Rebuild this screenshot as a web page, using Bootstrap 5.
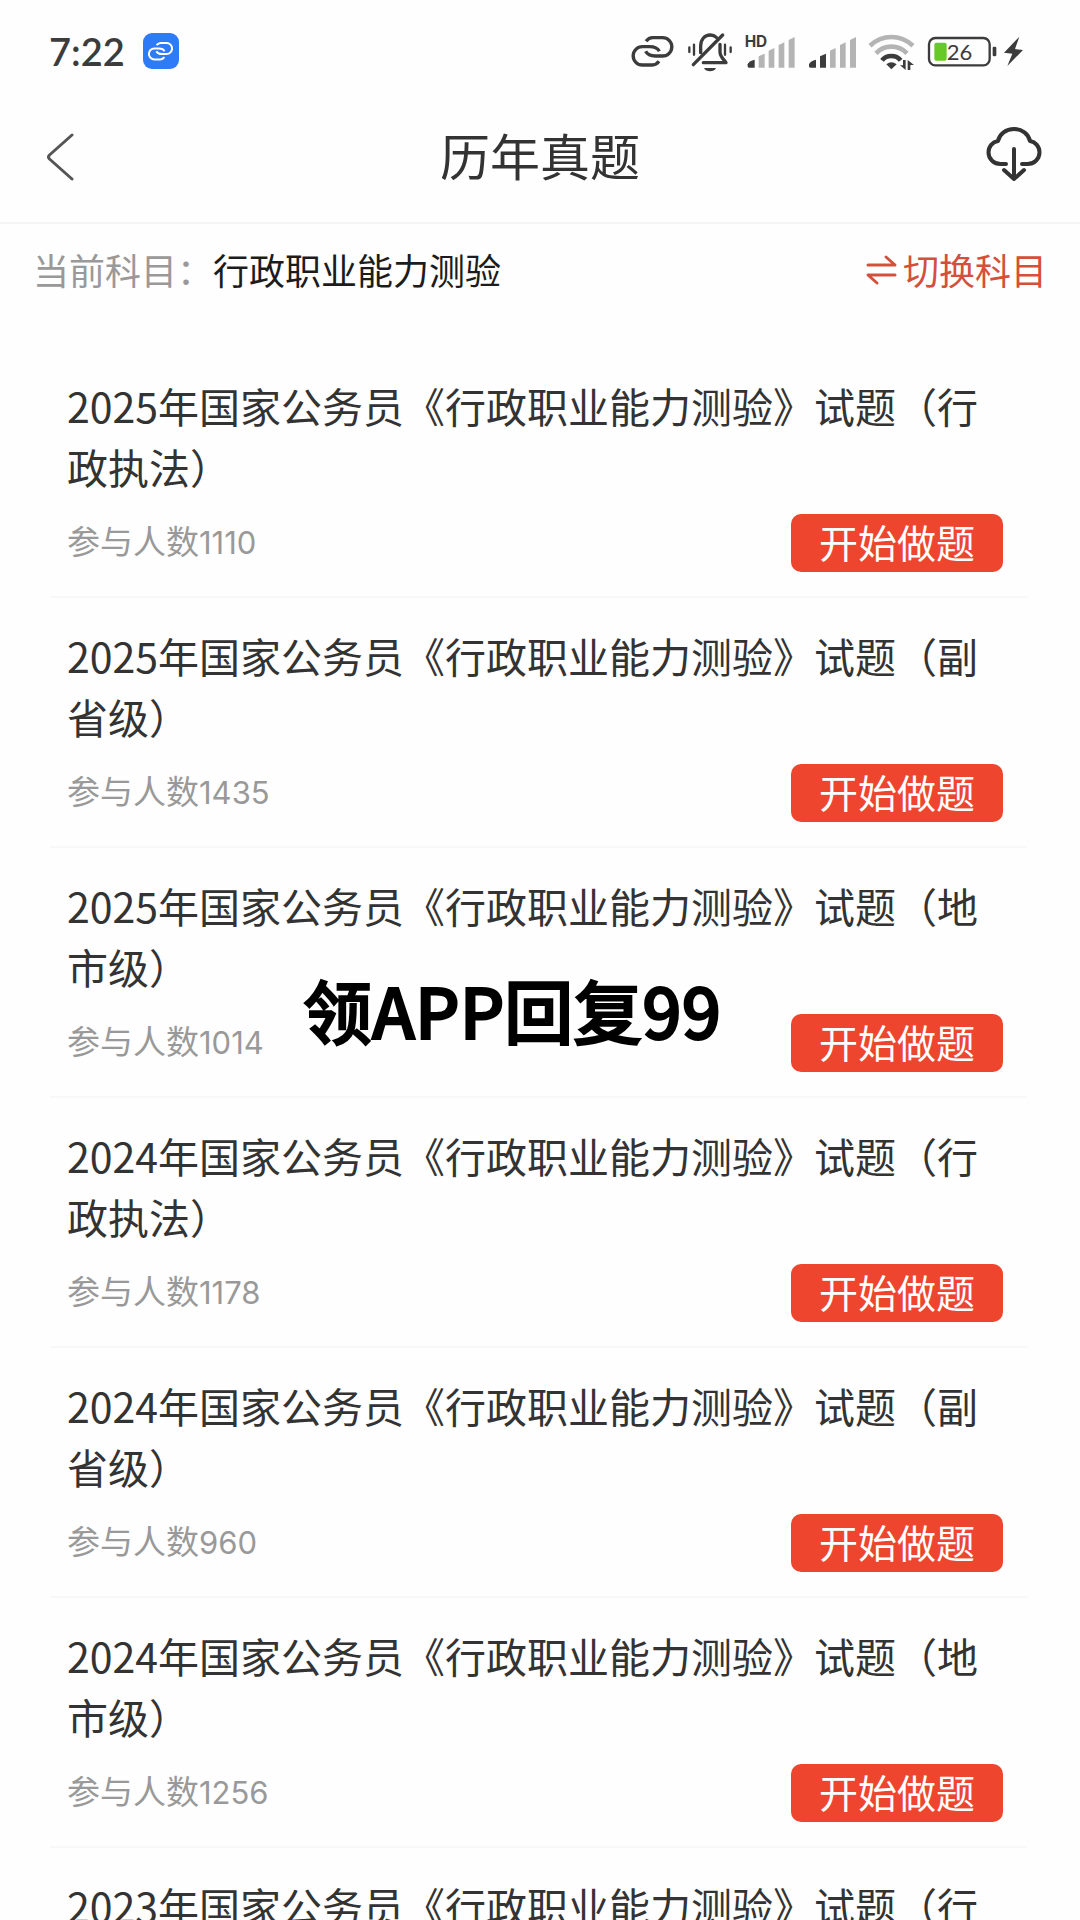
<!DOCTYPE html>
<html lang="zh-CN">
<head>
<meta charset="utf-8">
<meta name="viewport" content="width=device-width, initial-scale=1">
<title>历年真题</title>
<link href="https://cdn.jsdelivr.net/npm/bootstrap@5.3.0/dist/css/bootstrap.min.css" rel="stylesheet">
<style>
  body { background: #fefefe; color: #333; font-family: "Noto Sans CJK SC", sans-serif; }
  .app-screen { height: 100vh; }
  .status-bar { height: 94px; padding: 8px 56px 0 49px; color: #3c3c3c; }
  .clock { font-family: Lato, sans-serif; font-size: 38px; line-height: 40px; font-weight: 600; margin-right: 18px; }
  .link-badge { width: 36px; height: 36px; border-radius: 9px; background: #2d7bf6; color: #fff; }
  .status-icons { gap: 12px; }
  .power { gap: 6px; }
  .top-nav { height: 130px; padding: 0 38px; border-bottom: 2px solid #f4f4f4; }
  .top-nav h1 { font-size: 50px; line-height: 60px; font-weight: 400; padding-bottom: 8px; }
  .nav-side { width: 56px; color: #333; }
  .subject-bar { height: 94px; padding: 0 33px 4px; font-size: 36px; line-height: 40px; }
  .subject-label { color: #999; }
  .subject-name { color: #1c1c1c; }
  .subject-switch { color: #d3503c; gap: 6px; }
  .paper-list { padding: 30px 53px 0 50px; }
  .paper { padding: 27px 24px 24px 17px; border-bottom: 2px solid #f8f8f8; }
  .paper h2 { font-size: 41px; line-height: 61px; font-weight: 400; margin-bottom: 17px; }
  .paper-count { font-size: 33px; line-height: 40px; padding-bottom: 4px; color: #999; }
  .paper-count span { font-family: Inter, sans-serif; font-size: 31px; }
  .start-btn { width: 212px; height: 58px; border-radius: 10px; background: #ee452f; color: #fff; font-size: 39px; line-height: 54px; }
  .start-btn:hover { background: #d93a25; color: #fff; }
  .caption-text { left: 303px; top: 973px; font-size: 69px; line-height: 72px; font-weight: 500; color: #000; white-space: nowrap; -webkit-text-stroke: 2px #000; }
</style>
</head>
<body>
<svg class="d-none" aria-hidden="true">
  <symbol id="chain" viewBox="90 60 135 126">
    <g fill="none" stroke="currentColor" stroke-width="10">
      <path d="M138 94C144 86 150 83 158 83H188A27.5 27.5 0 0 1 188 138H166C152 138 142 134 137 124"/>
      <path d="M177 154C171 162 165 165 157 165H127A27.5 27.5 0 0 1 127 110H149C163 110 173 114 178 124"/>
    </g>
  </symbol>
</svg>

<div class="app-screen d-flex flex-column position-relative overflow-hidden">
  <div class="status-bar d-flex align-items-center justify-content-between flex-shrink-0">
    <div class="d-flex align-items-center">
      <span class="clock">7:22</span>
      <span class="link-badge d-flex align-items-center justify-content-center"><svg width="27" height="26"><use href="#chain"/></svg></span>
    </div>
    <div class="status-icons d-flex align-items-center">
      <svg width="45" height="42"><use href="#chain"/></svg>
      <svg width="46" height="42" viewBox="264 60 138 126" fill="none" stroke="currentColor" stroke-width="10" stroke-linecap="round">
        <path d="M305 128V108C305 88 317 75 334 75C342 75 348 78 352 82M363 103V126C363 140 374 148 381 158H313" stroke-linejoin="round"/>
        <path d="M283 164L371 75"/>
        <path d="M271 112V126M285 104V134M378 104V134M395 112V126" stroke-width="7"/>
        <path d="M315 174H351C346 187 320 187 315 174Z" fill="currentColor" stroke="none"/>
      </svg>
      <svg width="50" height="42" viewBox="435 60 150 126">
        <text x="434" y="111" font-family="Inter, sans-serif" font-size="46" font-weight="700" fill="currentColor">HD</text>
        <path fill="currentColor" d="M443 163Q447 152 464 149V173H447Q443 173 443 169Z"/>
        <path fill="#b4b4b4" d="M476 139L494 131V173H476ZM506 122L523 114V173H506ZM536 105L553 97V173H536ZM566 90L584 81V173H566Z"/>
      </svg>
      <svg width="49" height="42" viewBox="437 60 147 126">
        <path fill="currentColor" d="M443 163Q447 152 464 149V173H447Q443 173 443 169ZM476 139L494 131V173H476Z"/>
        <path fill="#b4b4b4" d="M506 122L523 114V173H506ZM536 105L553 97V173H536ZM566 90L584 81V173H566Z"/>
      </svg>
      <svg width="47" height="42" viewBox="142 60 141 126" fill="none" stroke-width="14">
        <path stroke="#b4b4b4" d="M148 107Q176 81 212 81T277 107M166 130Q185 110 212 110T259 130"/>
        <path stroke="currentColor" d="M184 151Q194 138 212 138T240 151"/>
        <path fill="currentColor" d="M197 163Q212 151 228 163L212 178Z"/>
        <path fill="currentColor" d="M247 150H255V180L238 166H247ZM261 150V180H269V165H280Z"/>
      </svg>
      <div class="power d-flex align-items-center">
        <svg width="70" height="42" viewBox="325 60 210 126">
          <rect x="331" y="84" width="182" height="82" rx="19" fill="none" stroke="currentColor" stroke-width="7"/>
          <rect x="347" y="98" width="37" height="54" rx="6" fill="#66c926"/>
          <rect x="522" y="110" width="11" height="29" rx="4" fill="currentColor"/>
          <text x="384" y="150" font-family="Lato, sans-serif" font-size="66" fill="currentColor">26</text>
        </svg>
        <svg width="21" height="42" viewBox="552 60 63 126"><path fill="currentColor" d="M601 80L555 128L580 131L565 168L612 120L588 117Z"/></svg>
      </div>
    </div>
  </div>

  <header class="top-nav d-flex align-items-center justify-content-between flex-shrink-0">
    <button type="button" class="nav-side btn border-0 p-0 ps-2 text-start" aria-label="返回">
      <svg class="d-block" width="28" height="50" viewBox="0 0 28 50" fill="none" stroke="#555" stroke-width="3" stroke-linecap="round" stroke-linejoin="round"><path d="M26 2L3.500 22Q1.500 24 3.500 26L26 46"/></svg>
    </button>
    <h1 class="m-0">历年真题</h1>
    <button type="button" class="nav-side btn border-0 p-0" aria-label="下载">
      <svg class="d-block" width="56" height="64" viewBox="0 0 56 64" fill="none" stroke="currentColor" stroke-width="4" stroke-linecap="round" stroke-linejoin="round">
        <path d="M20 38H14.500C8 38 2.500 33 2.500 26.500C2.500 20.500 6.500 16 12 15C13.500 8 20 3 28 3S42.500 8 44 15C49.500 16 53.500 20.500 53.500 26.500C53.500 33 48 38 41.500 38H36"/>
        <path d="M28 23V53M18 44L28 53L38 44"/>
      </svg>
    </button>
  </header>

  <div class="subject-bar d-flex align-items-center justify-content-between flex-shrink-0">
    <div><span class="subject-label">当前科目：</span><span class="subject-name">行政职业能力测验</span></div>
    <a href="#" class="subject-switch d-flex align-items-center text-decoration-none">
      <svg width="31" height="36" viewBox="0 0 31 36" fill="none" stroke="currentColor" stroke-width="3" stroke-linecap="round" stroke-linejoin="round"><path d="M2 14H29L20 6M29 24H2L11 32"/></svg>
      切换科目
    </a>
  </div>

  <main class="paper-list">
    <article class="paper">
      <h2>2025年国家公务员《行政职业能力测验》试题（行政执法）</h2>
      <div class="d-flex align-items-center justify-content-between">
        <div class="paper-count">参与人数<span>1110</span></div>
        <button type="button" class="start-btn btn border-0 p-0 pb-1">开始做题</button>
      </div>
    </article>
    <article class="paper">
      <h2>2025年国家公务员《行政职业能力测验》试题（副省级）</h2>
      <div class="d-flex align-items-center justify-content-between">
        <div class="paper-count">参与人数<span>1435</span></div>
        <button type="button" class="start-btn btn border-0 p-0 pb-1">开始做题</button>
      </div>
    </article>
    <article class="paper">
      <h2>2025年国家公务员《行政职业能力测验》试题（地市级）</h2>
      <div class="d-flex align-items-center justify-content-between">
        <div class="paper-count">参与人数<span>1014</span></div>
        <button type="button" class="start-btn btn border-0 p-0 pb-1">开始做题</button>
      </div>
    </article>
    <article class="paper">
      <h2>2024年国家公务员《行政职业能力测验》试题（行政执法）</h2>
      <div class="d-flex align-items-center justify-content-between">
        <div class="paper-count">参与人数<span>1178</span></div>
        <button type="button" class="start-btn btn border-0 p-0 pb-1">开始做题</button>
      </div>
    </article>
    <article class="paper">
      <h2>2024年国家公务员《行政职业能力测验》试题（副省级）</h2>
      <div class="d-flex align-items-center justify-content-between">
        <div class="paper-count">参与人数<span>960</span></div>
        <button type="button" class="start-btn btn border-0 p-0 pb-1">开始做题</button>
      </div>
    </article>
    <article class="paper">
      <h2>2024年国家公务员《行政职业能力测验》试题（地市级）</h2>
      <div class="d-flex align-items-center justify-content-between">
        <div class="paper-count">参与人数<span>1256</span></div>
        <button type="button" class="start-btn btn border-0 p-0 pb-1">开始做题</button>
      </div>
    </article>
    <article class="paper">
      <h2>2023年国家公务员《行政职业能力测验》试题（行</h2>
    </article>
  </main>

  <div class="caption-text position-absolute">领APP回复99</div>
</div>
<script src="https://cdn.jsdelivr.net/npm/bootstrap@5.3.0/dist/js/bootstrap.bundle.min.js"></script>
</body>
</html>
